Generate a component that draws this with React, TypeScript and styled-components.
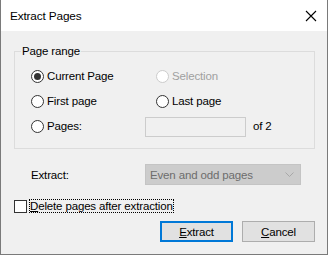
import React from "react";
import styled, { createGlobalStyle } from "styled-components";

const GlobalStyle = createGlobalStyle`
  body {
    margin: 0;
    background: #ffffff;
    font-family: "Segoe UI", "Liberation Sans", Arial, sans-serif;
    font-size: 11.5px;
    letter-spacing: -0.15px;
    color: #000000;
  }
`;

const Window = styled.div`
  box-sizing: border-box;
  width: 328px;
  height: 255px;
  display: flex;
  flex-direction: column;
  border: 1px solid #7a7a7a;
  border-top: none;
  background: #f0f0f0;
`;

const TitleBar = styled.div`
  height: 31px;
  flex: none;
  display: flex;
  align-items: center;
  justify-content: space-between;
  background: #ffffff;
  padding: 0 9px 0 9px;
  font-size: 11.8px;
`;

const Close = styled.svg`
  width: 12px;
  height: 12px;
  margin-right: 1px;
`;

const Body = styled.div`
  flex: 1;
  display: flex;
  flex-direction: column;
  padding: 20px 12px 0 13px;
`;

const GroupBox = styled.div`
  position: relative;
  box-sizing: border-box;
  height: 98px;
  border: 1px solid #dcdcdc;
  padding: 12px 0 0 16px;
  display: flex;
  flex-direction: column;
  gap: 1px;
`;

const Legend = styled.span`
  position: absolute;
  top: -8px;
  left: 6px;
  padding: 0 1px;
  background: #f0f0f0;
  line-height: 15px;
`;

const Row = styled.div`
  height: 24px;
  display: flex;
  align-items: center;
`;

const Cell = styled.div<{ $w: number }>`
  width: ${(p) => p.$w}px;
  flex: none;
  display: flex;
  align-items: center;
`;

const RadioCircle = styled.span<{ $checked?: boolean; $disabled?: boolean }>`
  box-sizing: border-box;
  width: 13px;
  height: 13px;
  border-radius: 50%;
  border: 1px solid ${(p) => (p.$disabled ? "#cccccc" : "#333333")};
  background: #ffffff;
  display: flex;
  align-items: center;
  justify-content: center;
  margin-right: 3px;
  flex: none;

  &::after {
    content: "";
    width: 7px;
    height: 7px;
    border-radius: 50%;
    background: #333333;
    display: ${(p) => (p.$checked ? "block" : "none")};
  }
`;

const Label = styled.span<{ $disabled?: boolean }>`
  color: ${(p) => (p.$disabled ? "#a0a0a0" : "#000000")};
  white-space: nowrap;
`;

const PagesInput = styled.div`
  box-sizing: border-box;
  width: 101px;
  height: 20px;
  border: 1px solid #cccccc;
  background: #f0f0f0;
  margin-right: 7px;
  margin-top: 1px;
`;

const ExtractRow = styled.div`
  display: flex;
  align-items: center;
  height: 21px;
  margin-top: 15px;
  padding-left: 17px;
`;

const Combo = styled.div`
  box-sizing: border-box;
  width: 156px;
  height: 21px;
  border: 1px solid #c4c4c4;
  background: #cccccc;
  color: #6d6d6d;
  display: flex;
  align-items: center;
  justify-content: space-between;
  padding: 0 6px 0 4px;
`;

const Chevron = styled.svg`
  width: 9px;
  height: 6px;
`;

const CheckRow = styled.div`
  display: flex;
  align-items: center;
  height: 14px;
  margin-top: 14px;
`;

const CheckBox = styled.span`
  box-sizing: border-box;
  width: 13px;
  height: 13px;
  border: 1px solid #333333;
  background: #ffffff;
  margin-right: 2px;
  flex: none;
`;

const FocusLabel = styled.span`
  border: 1px dotted #000000;
  line-height: 12px;
  white-space: nowrap;
`;

const ButtonRow = styled.div`
  display: flex;
  justify-content: flex-end;
  gap: 9px;
  margin-top: 8px;
`;

const Button = styled.div<{ $default?: boolean }>`
  box-sizing: border-box;
  width: 73px;
  height: 21px;
  display: flex;
  align-items: center;
  justify-content: center;
  background: #e1e1e1;
  border: ${(p) => (p.$default ? "2px solid #0078d7" : "1px solid #adadad")};
`;

function Radio({ checked, disabled, children }: { checked?: boolean; disabled?: boolean; children: React.ReactNode }) {
  return (
    <>
      <RadioCircle $checked={checked} $disabled={disabled} />
      <Label $disabled={disabled}>{children}</Label>
    </>
  );
}

export default function App(): React.ReactElement {
  return (
    <>
      <GlobalStyle />
      <Window>
        <TitleBar>
          <span>Extract Pages</span>
          <Close viewBox="0 0 12 12">
            <path d="M1 1 L11 11 M11 1 L1 11" stroke="#000" strokeWidth="1.1" fill="none" />
          </Close>
        </TitleBar>
        <Body>
          <GroupBox>
            <Legend>Page range</Legend>
            <Row>
              <Cell $w={125}>
                <Radio checked>Current Page</Radio>
              </Cell>
              <Cell $w={100}>
                <Radio disabled>Selection</Radio>
              </Cell>
            </Row>
            <Row>
              <Cell $w={125}>
                <Radio>First page</Radio>
              </Cell>
              <Cell $w={100}>
                <Radio>Last page</Radio>
              </Cell>
            </Row>
            <Row>
              <Cell $w={114}>
                <Radio>Pages:</Radio>
              </Cell>
              <PagesInput />
              <Label>of 2</Label>
            </Row>
          </GroupBox>
          <ExtractRow>
            <Cell $w={114}>
              <Label>Extract:</Label>
            </Cell>
            <Combo>
              <span>Even and odd pages</span>
              <Chevron viewBox="0 0 9 6">
                <path d="M0.5 0.5 L4.5 4.5 L8.5 0.5" stroke="#a8a8a8" strokeWidth="1" fill="none" />
              </Chevron>
            </Combo>
          </ExtractRow>
          <CheckRow>
            <CheckBox />
            <FocusLabel>
              <u>D</u>elete pages after extraction
            </FocusLabel>
          </CheckRow>
          <ButtonRow>
            <Button $default>
              <span>
                <u>E</u>xtract
              </span>
            </Button>
            <Button>
              <span>
                <u>C</u>ancel
              </span>
            </Button>
          </ButtonRow>
        </Body>
      </Window>
    </>
  );
}
